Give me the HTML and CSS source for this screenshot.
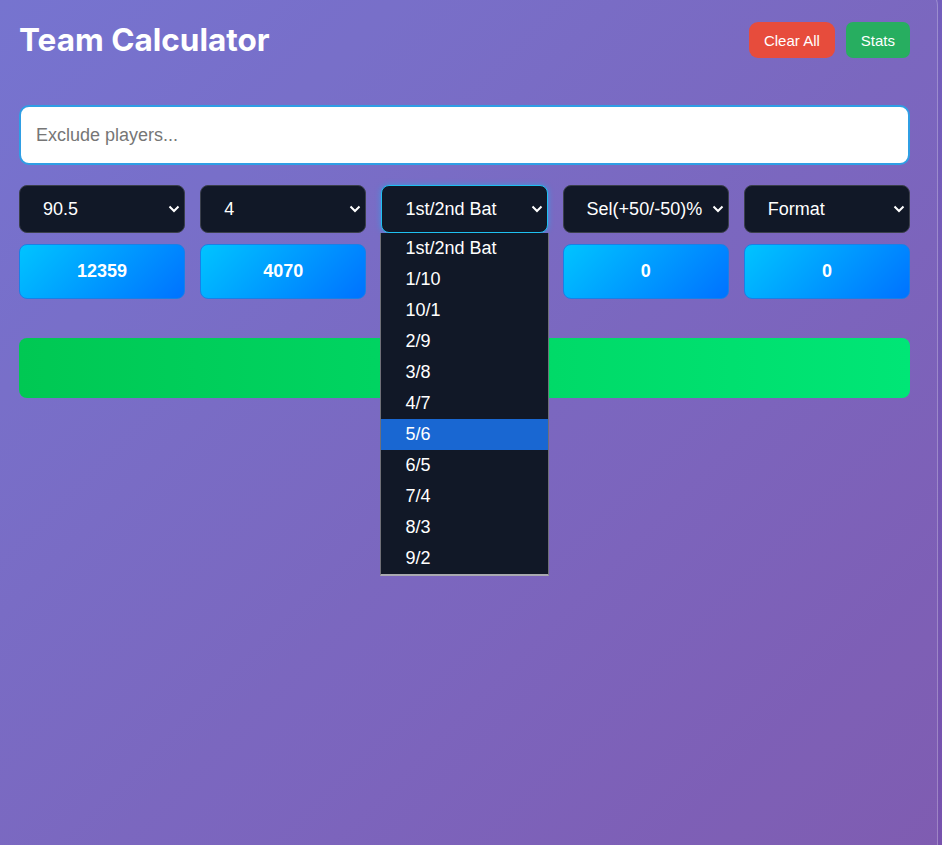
FILE: index.html
```html
<!DOCTYPE html>
<html>
    <head>
        <title>Team Calculator</title>
        <link rel="stylesheet" href="styles.css">
    </head>
    <body>
        <div class="container">
            <header>
                <h1>Team Calculator</h1>
                <div class="spacer"></div>
                <button class="btn btn-clear">Clear All</button>
                <button class="btn btn-stats">Stats</button>
            </header>

            <input class="exclude" type="text" placeholder="Exclude players...">

            <div class="grid">
                <div class="field">
                    <select><option>90.5</option></select>
                    <svg class="chevron" viewBox="0 0 12 8"><path d="M1.5 1.5 L6 6 L10.5 1.5"/></svg>
                </div>
                <div class="field">
                    <select><option>4</option></select>
                    <svg class="chevron" viewBox="0 0 12 8"><path d="M1.5 1.5 L6 6 L10.5 1.5"/></svg>
                </div>
                <div class="field open">
                    <select class="focused"><option>1st/2nd Bat</option></select>
                    <svg class="chevron" viewBox="0 0 12 8"><path d="M1.5 1.5 L6 6 L10.5 1.5"/></svg>
                    <ul class="dropdown">
                        <li>1st/2nd Bat</li>
                        <li>1/10</li>
                        <li>10/1</li>
                        <li>2/9</li>
                        <li>3/8</li>
                        <li>4/7</li>
                        <li class="active">5/6</li>
                        <li>6/5</li>
                        <li>7/4</li>
                        <li>8/3</li>
                        <li>9/2</li>
                    </ul>
                </div>
                <div class="field">
                    <select><option>Sel(+50/-50)%</option></select>
                    <svg class="chevron" viewBox="0 0 12 8"><path d="M1.5 1.5 L6 6 L10.5 1.5"/></svg>
                </div>
                <div class="field">
                    <select><option>Format</option></select>
                    <svg class="chevron" viewBox="0 0 12 8"><path d="M1.5 1.5 L6 6 L10.5 1.5"/></svg>
                </div>

                <div class="stat">12359</div>
                <div class="stat">4070</div>
                <div class="stat">0</div>
                <div class="stat">0</div>
                <div class="stat">0</div>
            </div>

            <div class="generate"></div>
        </div>
    </body>
</html>
```

FILE: styles.css
```css
html, body {
    margin: 0;
    height: 100%;
    overflow: hidden;
}
body {
    background: linear-gradient(135deg, #6e6ccd 0%, #7752ad 100%);
    font-family: "Liberation Sans", Arial, sans-serif;
}
.container {
    box-sizing: border-box;
    width: 958px;
    min-height: 900px;
    margin: -14px 0 0 -20px;
    padding: 35px 27px 0 38px;
    background: rgba(255, 255, 255, 0.06);
    border: 1px solid rgba(255, 255, 255, 0.25);
    border-radius: 20px;
}
header {
    display: flex;
    align-items: center;
    gap: 11px;
    height: 36px;
    margin-bottom: 47px;
}
header h1 {
    margin: 0;
    font-family: Inter, sans-serif;
    font-size: 31.5px;
    font-weight: 700;
    color: #fff;
    line-height: 36px;
}
.spacer {
    flex-grow: 1;
}
.btn {
    height: 36px;
    padding: 0 15px;
    border: none;
    border-radius: 9px;
    color: #fff;
    font-family: "Liberation Sans", Arial, sans-serif;
    font-size: 15px;
}
.btn-clear {
    background: #e74c3c;
}
.btn-stats {
    background: #27ae60;
    border-radius: 7px;
}
.exclude {
    display: block;
    box-sizing: border-box;
    width: 100%;
    height: 60px;
    padding: 0 15px;
    border: 2px solid #2f9ee4;
    border-radius: 10px;
    background: #fff;
    font-family: "Liberation Sans", Arial, sans-serif;
    font-size: 18px;
    outline: none;
}
.exclude::placeholder {
    color: #767676;
}
.grid {
    display: grid;
    grid-template-columns: repeat(5, 1fr);
    column-gap: 15px;
    row-gap: 11px;
    margin-top: 20px;
}
.field {
    position: relative;
}
.field select {
    appearance: none;
    display: block;
    box-sizing: border-box;
    width: 100%;
    height: 48px;
    padding: 0 0 0 23px;
    background: #111827;
    border: 1px solid #3a3f4b;
    border-radius: 8px;
    color: #fff;
    font-family: "Liberation Sans", Arial, sans-serif;
    font-size: 18px;
    outline: none;
}
.field select.focused {
    border-color: #1fc0f0;
    box-shadow: 0 0 6px rgba(0, 200, 255, 0.45);
}
.chevron {
    position: absolute;
    right: 5px;
    top: 20px;
    width: 12px;
    height: 8px;
    fill: none;
    stroke: #fff;
    stroke-width: 2;
}
.dropdown {
    position: absolute;
    top: 48px;
    left: -1px;
    right: -1px;
    z-index: 5;
    margin: 0;
    padding: 0;
    list-style: none;
    background: #111827;
    border: 1px solid #6f6f78;
    border-top: none;
    border-bottom: 2px solid #a9a9b0;
}
.dropdown li {
    height: 31px;
    line-height: 31px;
    padding-left: 24px;
    color: #fff;
    font-size: 18px;
}
.dropdown li.active {
    background: #1967d2;
}
.stat {
    height: 55px;
    box-sizing: border-box;
    display: flex;
    align-items: center;
    justify-content: center;
    background: linear-gradient(135deg, #00c4ff 0%, #0072ff 100%);
    border: 1px solid #1b7fe6;
    border-radius: 8px;
    color: #fff;
    font-size: 18px;
    font-weight: 700;
}
.generate {
    height: 60px;
    margin-top: 39px;
    border-radius: 8px;
    background: linear-gradient(90deg, #00c853 0%, #00e676 100%);
}
```
